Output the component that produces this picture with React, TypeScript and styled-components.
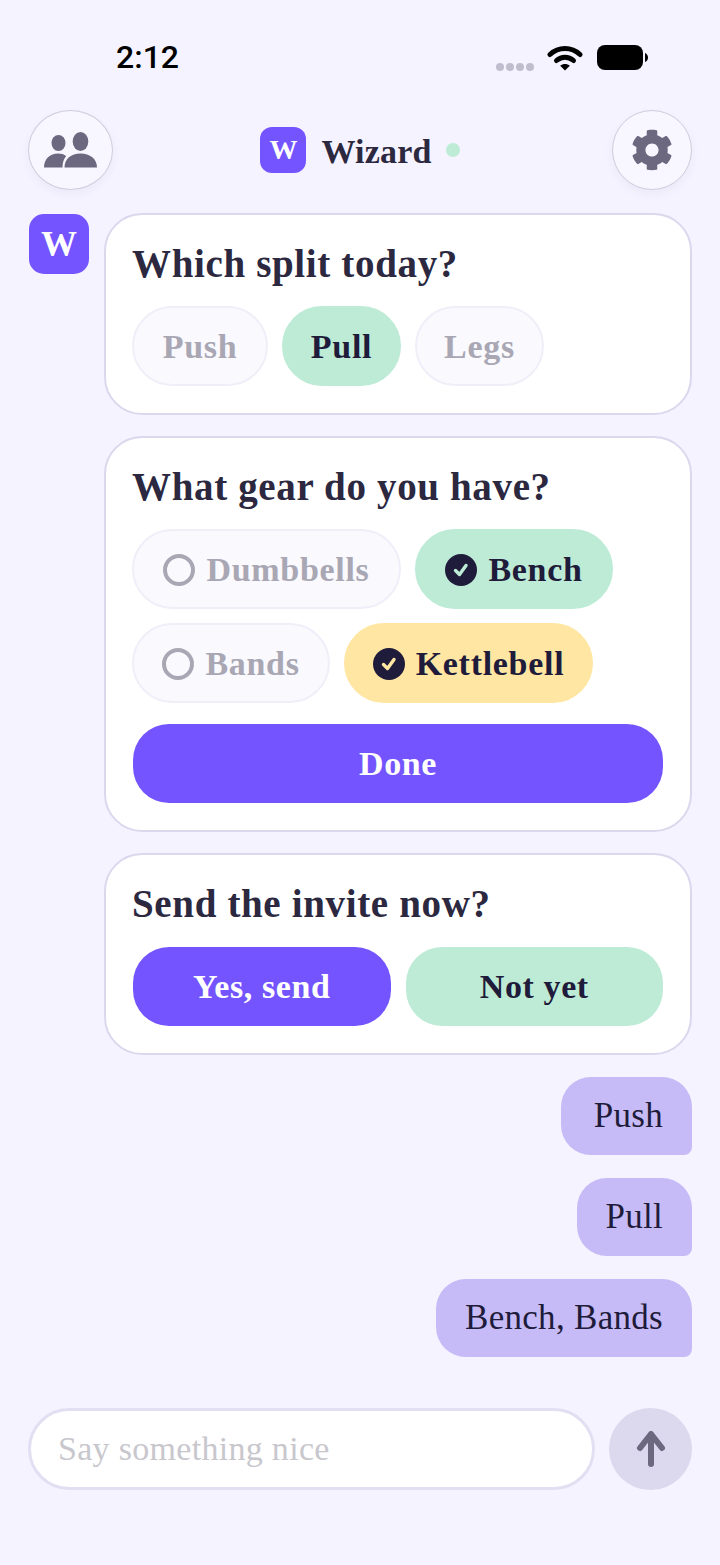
import styled, { createGlobalStyle } from "styled-components";
import { FaCog } from "react-icons/fa";

const GlobalStyle = createGlobalStyle`
  html, body {
    margin: 0;
    padding: 0;
    background: #f5f3ff;
  }
  * {
    box-sizing: border-box;
  }
`;

const SERIF = `"Liberation Serif", "Times New Roman", serif`;

const Screen = styled.div`
  width: 720px;
  height: 1565px;
  padding: 0 28px;
  display: flex;
  flex-direction: column;
  font-family: ${SERIF};
  background: #f5f3ff;
  overflow: hidden;
`;

const StatusBar = styled.div`
  height: 110px;
  display: flex;
  align-items: flex-start;
  padding: 39px 0 0 88px;
`;

const Time = styled.div`
  font-family: Roboto, "Liberation Sans", sans-serif;
  font-weight: 500;
  font-size: 32px;
  line-height: 37px;
  color: #000;
  width: 380px;
`;

const StatusIcons = styled.div`
  display: flex;
  align-items: flex-start;
  margin-top: 6px;
`;

const Signal = styled.div`
  display: flex;
  gap: 2px;
  margin: 18px 13px 0 0;
`;

const SignalDot = styled.span`
  width: 8px;
  height: 8px;
  border-radius: 50%;
  background: #c0bece;
`;

const BatterySlot = styled.div`
  margin-left: 14px;
`;

const Header = styled.div`
  height: 80px;
  display: flex;
  align-items: center;
  justify-content: space-between;
`;

const RoundButton = styled.div<{ $wide?: boolean }>`
  width: ${(p) => (p.$wide ? 85 : 80)}px;
  height: 80px;
  border-radius: 50%;
  border: 1px solid #cfccdc;
  background: #f8f6ff;
  box-shadow: 0 4px 10px rgba(60, 50, 120, 0.05);
  display: flex;
  align-items: center;
  justify-content: center;
  color: #6b6880;
`;

const Brand = styled.div`
  display: flex;
  align-items: center;
  margin-left: -5px;
`;

const LogoTile = styled.div<{ $size: number; $radius: number; $font: number; $drop?: number }>`
  width: ${(p) => p.$size}px;
  height: ${(p) => p.$size}px;
  margin-top: ${(p) => p.$drop ?? 0}px;
  border-radius: ${(p) => p.$radius}px;
  background: #7354ff;
  color: #fff;
  font-weight: 700;
  font-size: ${(p) => p.$font}px;
  display: flex;
  align-items: center;
  justify-content: center;
  flex: none;
`;

const BrandName = styled.div`
  margin-left: 15px;
  padding-top: 3px;
  font-size: 34px;
  font-weight: 700;
  color: #2b2840;
  letter-spacing: 0.2px;
`;

const OnlineDot = styled.span`
  width: 14px;
  height: 14px;
  border-radius: 50%;
  background: #bdebd6;
  margin-left: 14px;
`;

const Thread = styled.div`
  display: flex;
  gap: 15px;
  margin-top: 23px;
  padding-left: 1px;
`;

const Cards = styled.div`
  flex: 1;
  display: flex;
  flex-direction: column;
  gap: 21px;
`;

const Card = styled.div`
  background: #fff;
  border: 2px solid #dbd8ee;
  border-radius: 38px;
  padding: 27px;
  display: flex;
  flex-direction: column;
`;

const Question = styled.div`
  font-size: 39px;
  line-height: 44px;
  font-weight: 700;
  color: #2b2840;
  letter-spacing: 0.65px;
  margin: 0 0 20px -1px;
`;

const PillRow = styled.div`
  display: flex;
  gap: 14px;
  margin: 0 0 14px -1px;
  &:last-child {
    margin-bottom: 0;
  }
`;

const TONES = {
  off: { bg: "#faf9fe", border: "#f0eef8", color: "#a8a7b3" },
  mint: { bg: "#bdebd6", border: "#bdebd6", color: "#1f1b3a" },
  yellow: { bg: "#ffe6a3", border: "#ffe6a3", color: "#1f1b3a" },
  purple: { bg: "#7354ff", border: "#7354ff", color: "#fff" },
};

type Tone = keyof typeof TONES;

const Pill = styled.div<{ $tone: Tone; $width: number }>`
  width: ${(p) => p.$width}px;
  height: 80px;
  padding-top: 1px;
  border-radius: 40px;
  border: 2px solid ${(p) => TONES[p.$tone].border};
  background: ${(p) => TONES[p.$tone].bg};
  color: ${(p) => TONES[p.$tone].color};
  font-size: 34px;
  font-weight: 700;
  letter-spacing: 0.7px;
  display: flex;
  align-items: center;
  justify-content: center;
  gap: 11px;
`;

const WideButton = styled.div<{ $tone: Tone }>`
  flex: 1;
  height: 79px;
  border-radius: 36px;
  background: ${(p) => TONES[p.$tone].bg};
  color: ${(p) => TONES[p.$tone].color};
  font-size: 34px;
  font-weight: 700;
  letter-spacing: 0.6px;
  display: flex;
  align-items: center;
  justify-content: center;
`;

const DoneRow = styled.div`
  display: flex;
  margin-top: 7px;
`;

const ButtonRow = styled.div`
  display: flex;
  gap: 15px;
  margin-top: 1px;
`;

const Replies = styled.div`
  display: flex;
  flex-direction: column;
  align-items: flex-end;
  gap: 23px;
  margin-top: 22px;
`;

const Bubble = styled.div<{ $width: number }>`
  width: ${(p) => p.$width}px;
  height: 78px;
  padding-right: 29px;
  border-radius: 30px 30px 8px 30px;
  background: #c6bbf7;
  color: #1f1b3a;
  font-size: 35px;
  letter-spacing: 0.3px;
  display: flex;
  align-items: center;
  justify-content: flex-end;
`;

const Composer = styled.div`
  display: flex;
  gap: 14px;
  margin-top: 51px;
`;

const InputBox = styled.div`
  flex: 1;
  height: 82px;
  border-radius: 41px;
  border: 3px solid #e2dff3;
  background: #fff;
  padding: 0 27px;
  display: flex;
  align-items: center;
  color: #c8c7cd;
  font-size: 34px;
  letter-spacing: 0.3px;
`;

const SendButton = styled.div`
  width: 83px;
  height: 82px;
  border-radius: 50%;
  background: #dcd8ee;
  display: flex;
  align-items: center;
  justify-content: center;
`;

const UsersIcon = () => (
  <svg width="54" height="36" viewBox="0 0 54 36" fill="currentColor">
    <ellipse cx="14.5" cy="11" rx="7" ry="8" />
    <ellipse cx="36.5" cy="9.5" rx="7.8" ry="9.5" />
    <path d="M0 35.5 C0 27 6 21.5 14 21.5 C17.5 21.5 20 22.3 22.2 24 C19.5 27 18.5 31 18.5 35.5 Z" />
    <path d="M20.5 35.5 C20.5 27 27 21.5 36.5 21.5 C46 21.5 53 27 53 35.5 Z" />
  </svg>
);

const WifiIcon = () => (
  <svg width="36" height="26" viewBox="0 0 36 26" fill="none" stroke="#000" strokeWidth="5" strokeLinecap="round">
    <path d="M3 9.5 C11.5 1.5 24.5 1.5 33 9.5" />
    <path d="M9.5 15.5 C14.5 11 21.5 11 26.5 15.5" />
    <path d="M18 25.5 L13.2 20.8 C16 18.5 20 18.5 22.8 20.8 Z" fill="#000" stroke="none" />
  </svg>
);

const BatteryIcon = () => (
  <svg width="52" height="26" viewBox="0 0 52 26" fill="#000">
    <rect x="0" y="0" width="46" height="25" rx="8" />
    <path d="M48 8 C50 9 51 10.5 51 12.5 C51 14.5 50 16 48 17 Z" />
  </svg>
);

const CheckMark = ({ tint }: { tint: string }) => (
  <svg width="32" height="32" viewBox="0 0 32 32">
    <circle cx="16" cy="16" r="16" fill="#1f1b3a" />
    <path d="M10.5 16.5 L14.5 20.5 L21 11.5" fill="none" stroke={tint} strokeWidth="3.4" strokeLinecap="round" strokeLinejoin="round" />
  </svg>
);

const EmptyMark = () => (
  <svg width="32" height="32" viewBox="0 0 32 32">
    <circle cx="16" cy="16" r="14" fill="none" stroke="#a8a7b3" strokeWidth="4" />
  </svg>
);

const ArrowUpIcon = () => (
  <svg width="30" height="36" viewBox="0 0 30 36" fill="none" stroke="#6b6880" strokeWidth="6" strokeLinecap="round" strokeLinejoin="round">
    <path d="M15 33 L15 4" />
    <path d="M4 17 L15 3 L26 17" />
  </svg>
);

export default function App() {
  return (
    <>
      <GlobalStyle />
      <Screen>
        <StatusBar>
          <Time>2:12</Time>
          <StatusIcons>
            <Signal>
              <SignalDot />
              <SignalDot />
              <SignalDot />
              <SignalDot />
            </Signal>
            <WifiIcon />
            <BatterySlot>
              <BatteryIcon />
            </BatterySlot>
          </StatusIcons>
        </StatusBar>

        <Header>
          <RoundButton $wide>
            <UsersIcon />
          </RoundButton>
          <Brand>
            <LogoTile $size={46} $radius={12} $font={28}>W</LogoTile>
            <BrandName>Wizard</BrandName>
            <OnlineDot />
          </Brand>
          <RoundButton>
            <FaCog size={42} />
          </RoundButton>
        </Header>

        <Thread>
          <LogoTile $size={60} $radius={15} $font={36} $drop={1}>W</LogoTile>
          <Cards>
            <Card>
              <Question>Which split today?</Question>
              <PillRow>
                <Pill $tone="off" $width={136}>Push</Pill>
                <Pill $tone="mint" $width={119}>Pull</Pill>
                <Pill $tone="off" $width={129}>Legs</Pill>
              </PillRow>
            </Card>
            <Card>
              <Question>What gear do you have?</Question>
              <PillRow>
                <Pill $tone="off" $width={269}><EmptyMark />Dumbbells</Pill>
                <Pill $tone="mint" $width={198}><CheckMark tint="#bdebd6" />Bench</Pill>
              </PillRow>
              <PillRow>
                <Pill $tone="off" $width={198}><EmptyMark />Bands</Pill>
                <Pill $tone="yellow" $width={249}><CheckMark tint="#ffe6a3" />Kettlebell</Pill>
              </PillRow>
              <DoneRow>
                <WideButton $tone="purple">Done</WideButton>
              </DoneRow>
            </Card>
            <Card>
              <Question>Send the invite now?</Question>
              <ButtonRow>
                <WideButton $tone="purple">Yes, send</WideButton>
                <WideButton $tone="mint">Not yet</WideButton>
              </ButtonRow>
            </Card>
          </Cards>
        </Thread>

        <Replies>
          <Bubble $width={131}>Push</Bubble>
          <Bubble $width={115}>Pull</Bubble>
          <Bubble $width={256}>Bench, Bands</Bubble>
        </Replies>

        <Composer>
          <InputBox>Say something nice</InputBox>
          <SendButton>
            <ArrowUpIcon />
          </SendButton>
        </Composer>
      </Screen>
    </>
  );
}
